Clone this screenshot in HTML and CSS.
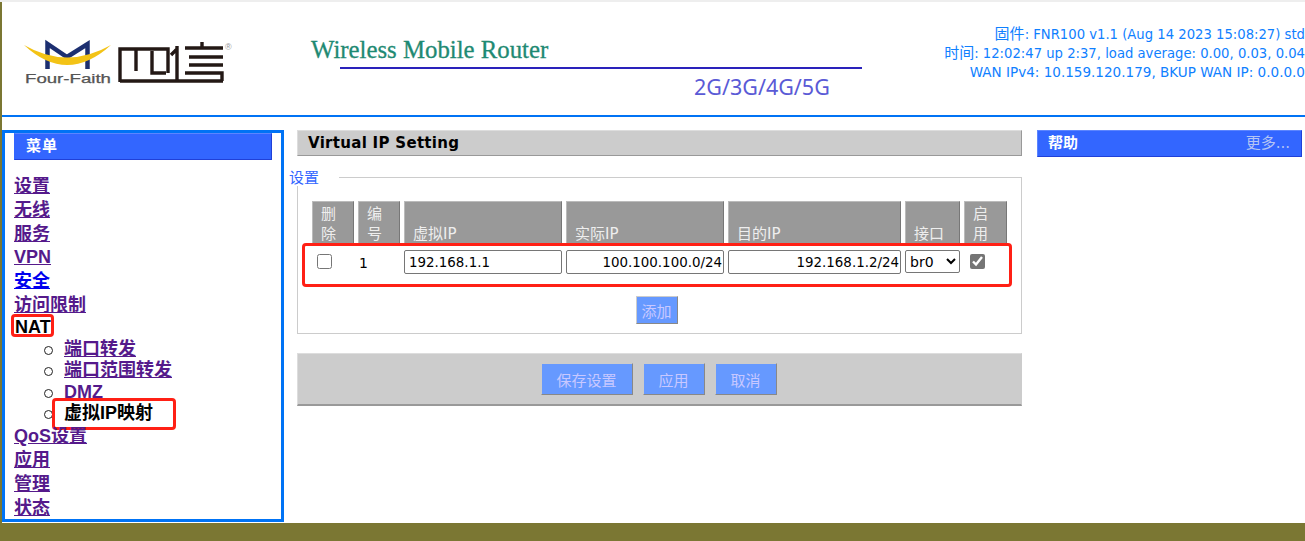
FILE: index.html
```html
<!DOCTYPE html>
<html lang="zh">
<head>
<meta charset="utf-8">
<title>Virtual IP Setting</title>
<link rel="stylesheet" href="styles.css">
</head>
<body>
<div class="page">
  <header class="header">
    <svg class="logo" width="215" height="50" viewBox="0 0 215 50" aria-label="Four-Faith">
      <path d="M22.5 29V4L42 17L62.5 4V29" fill="none" stroke="#1c2f70" stroke-width="4.5"/>
      <path d="M-1 5Q42 45 86 5Q42 30 -1 5Z" fill="#f3c316"/>
      <text class="logo-text" x="0" y="43" textLength="86" lengthAdjust="spacingAndGlyphs">Four-Faith</text>
      <g fill="none" stroke="#231815" stroke-width="3.4">
        <path d="M95 42V9H143V33M95 41H198"/>
        <path d="M111 9V31M127 11V33H141"/>
        <path d="M152 6V41M146 15L152 9"/>
        <path d="M160 8H198M177 2V8M164 17H198M164 25H198M160 33H197V41"/>
      </g>
      <text class="logo-reg" x="200" y="10">®</text>
    </svg>
    <div class="banner">
      <div class="banner-title">Wireless Mobile Router</div>
      <div class="banner-rule"></div>
      <div class="banner-bands">2G/3G/4G/5G</div>
    </div>
    <div class="info">
      <div class="info-line"><span class="cjk">固件</span>: FNR100 v1.1 (Aug 14 2023 15:08:27) std</div>
      <div class="info-line"><span class="cjk">时间</span>: 12:02:47 up 2:37, load average: 0.00, 0.03, 0.04</div>
      <div>WAN IPv4: 10.159.120.179, BKUP WAN IP: 0.0.0.0</div>
    </div>
  </header>

  <main class="main">
    <nav class="menu">
      <h2 class="menu-title">菜单</h2>
      <ul class="nav">
        <li><a class="visited" href="#">设置</a></li>
        <li><a class="visited" href="#">无线</a></li>
        <li><a class="visited" href="#">服务</a></li>
        <li><a class="visited" href="#">VPN</a></li>
        <li><a href="#">安全</a></li>
        <li><a class="visited" href="#">访问限制</a></li>
        <li class="current"><div class="nat">NAT</div><span class="mark mark-nat"></span>
          <ul class="subnav">
            <li><a class="visited" href="#">端口转发</a></li>
            <li><a class="visited" href="#">端口范围转发</a></li>
            <li><a class="visited" href="#">DMZ</a></li>
            <li class="current">虚拟IP映射<span class="mark mark-sub"></span></li>
          </ul>
        </li>
        <li><a class="visited" href="#">QoS设置</a></li>
        <li><a class="visited" href="#">应用</a></li>
        <li><a class="visited" href="#">管理</a></li>
        <li><a class="visited" href="#">状态</a></li>
      </ul>
    </nav>

    <section class="content">
      <h2 class="content-title">Virtual IP Setting</h2>
      <fieldset class="settings">
        <legend>设置</legend>
        <span class="mark mark-row"></span>
        <table class="grid">
          <thead>
            <tr>
              <th class="c-del">删除</th>
              <th class="c-num">编号</th>
              <th class="c-ip">虚拟IP</th>
              <th class="c-ip">实际IP</th>
              <th class="c-dst">目的IP</th>
              <th class="c-if">接口</th>
              <th class="c-on">启用</th>
            </tr>
          </thead>
          <tbody>
            <tr>
              <td><input class="check check-del" type="checkbox"></td>
              <td class="num">1</td>
              <td><input class="field" type="text" value="192.168.1.1"></td>
              <td><input class="field right" type="text" value="100.100.100.0/24"></td>
              <td><input class="field right" type="text" value="192.168.1.2/24"></td>
              <td><select class="pick"><option>br0</option></select></td>
              <td><input class="check check-on" type="checkbox" checked></td>
            </tr>
          </tbody>
        </table>
        <div class="add-row"><button class="btn btn-add" type="button">添加</button></div>
      </fieldset>
      <div class="actions">
        <button class="btn btn-save" type="button">保存设置</button>
        <button class="btn btn-act" type="button">应用</button>
        <button class="btn btn-act" type="button">取消</button>
      </div>
    </section>

    <aside class="help">
      <strong>帮助</strong>
      <span class="more">更多...</span>
    </aside>
  </main>
  <footer class="footer"></footer>
</div>
</body>
</html>
```
FILE: styles.css
```css
* { box-sizing: border-box; }
html, body { margin: 0; padding: 0; }
body {
  background: #fff;
  font-family: "DejaVu Sans", "Noto Sans CJK SC", sans-serif;
  font-size: 14px;
  color: #000;
  overflow: hidden;
}
.page {
  height: 541px;
  display: flex;
  flex-direction: column;
  border-top: 2px solid #eee;
  background: linear-gradient(#7b7733, #7b7733) left top / 2px 100% no-repeat;
}

/* header */
.header {
  height: 115px;
  margin-left: 2px;
  border-bottom: 2px solid #0073f5;
  display: flex;
  align-items: flex-start;
  flex-shrink: 0;
  background: #fff;
}
.logo { margin: 38px 0 0 23px; flex-shrink: 0; overflow: visible; }
.logo-text { font: 12px "Liberation Sans", sans-serif; fill: #555; stroke: #555; stroke-width: 0.25px; }
.logo-reg { font: 9px "Liberation Sans", sans-serif; fill: #999; }
.banner { width: 551px; margin: 34px 0 0 71px; flex-shrink: 0; }
.banner-title {
  font: 24.8px/28px "Liberation Serif", serif;
  color: #1f8a73;
  -webkit-text-stroke: 0.3px #1f8a73;
  white-space: nowrap;
}
.banner-rule { height: 2px; margin: 3px 0 0 29px; background: #2a22bb; }
.banner-bands { margin: 6px 0 0 383px; font: 21.5px/24px "Noto Sans", sans-serif; color: #5a5ad6; white-space: nowrap; }
.info {
  flex: 1;
  margin-top: 23px;
  text-align: right;
  color: #0f80ff;
  font-size: 13.55px;
  line-height: 19px;
  white-space: nowrap;
}
.info-line { font-size: 13.2px; }
.cjk { font-size: 15px; }

/* layout */
.main {
  flex: 1;
  margin-left: 2px;
  padding: 13px 3px 1px 0;
  display: flex;
  align-items: flex-start;
  background: #fff;
}
.footer { height: 18px; background: #7b7733; flex-shrink: 0; }

/* menu */
.menu {
  width: 282px;
  height: 392px;
  border: 3px solid #0073f5;
  flex-shrink: 0;
  padding: 0 9px;
}
.menu-title {
  margin: 0;
  height: 27px;
  width: 258px;
  background: #3366ff;
  border: 1px solid;
  border-color: #5c85ff #2040d8 #2040d8 #3366ff;
  color: #fff;
  font-size: 15px;
  letter-spacing: 1px;
  line-height: 25px;
  padding-left: 11px;
  font-weight: bold;
}
.nav, .subnav { list-style: none; margin: 0; padding: 0; }
.nav {
  margin-top: 15px;
  font-family: "Liberation Sans", "Noto Sans CJK SC", sans-serif;
  font-size: 18px;
  font-weight: bold;
  line-height: 23.8px;
}
.nav > li { position: relative; }
.nat { line-height: 18px; padding: 0 0 3px 1px; }
.nav a { color: #0000ee; }
.nav a.visited { color: #551a8b; }
.subnav { margin: 0 0 1px 50px; line-height: 21.4px; position: relative; }
.subnav > li { position: relative; }
.subnav > li::before {
  content: "";
  position: absolute;
  left: -20px;
  top: 7px;
  width: 7px;
  height: 7px;
  border: 1.5px solid #222;
  border-radius: 50%;
}
.current { color: #000; }

/* annotation frames */
.mark {
  position: absolute;
  border: 3px solid #ff2015;
  border-radius: 4px;
  pointer-events: none;
}
.mark-nat { left: -3px; top: -4px; width: 43px; height: 23px; }
.mark-sub { left: -12px; top: -5px; width: 124px; height: 32px; }
.mark-row { left: 4px; top: 57px; width: 710px; height: 44px; }

/* content */
.content { width: 725px; margin-left: 13px; flex-shrink: 0; }
.content-title {
  margin: 0;
  height: 26px;
  background: #ccc;
  border: 1px solid;
  border-color: #ddd #999 #999 #ddd;
  font-size: 15px;
  line-height: 25px;
  padding-left: 10px;
  font-weight: bold;
  letter-spacing: 0.3px;
}
.settings {
  position: relative;
  margin: 12px 0 0;
  padding: 0 0 9px 10px;
  height: 166px;
  border: 1px solid #ccc;
  min-width: 0;
}
.settings legend {
  margin-left: -19px;
  padding: 2px 0 0;
  width: 50px;
  color: #3366ff;
  font-size: 15px;
  line-height: 16px;
}
.grid { table-layout: fixed; border-collapse: separate; border-spacing: 4px 0; margin: 15px 0 0; width: 701px; }
.c-del, .c-num { width: 42px; }
.c-ip { width: 158px; }
.c-dst { width: 173px; }
.c-if { width: 55px; }
.c-on { width: 43px; }
.grid th {
  height: 43px;
  background: #999;
  border-style: solid;
  border-width: 1px 1px 0 1px;
  border-color: #bbb #777 #777 #bbb;
  color: #eee;
  font-weight: normal;
  font-size: 15px;
  line-height: 20px;
  vertical-align: bottom;
  text-align: left;
  padding: 0 7px 0 8px;
}
.grid th.c-on { padding: 0 8px; }
.grid td { padding: 6px 0 0; vertical-align: top; font-size: 14px; }
.num { line-height: 26px; }
.grid td.num { padding-left: 1px; }
.check { width: 15px; height: 15px; margin: 4px 0 0; accent-color: #757575; }
.check-del { margin-left: 5px; }
.check-on { margin-left: 6px; }
.field {
  width: 100%;
  height: 24px;
  border: 1px solid #767676;
  border-radius: 2px;
  padding: 0 4px;
  font: 13.4px "DejaVu Sans", sans-serif;
  color: #000;
  background: #fff;
}
.right { text-align: right; padding-right: 1px; }
.pick {
  width: 55px;
  height: 23px;
  font: 14px "DejaVu Sans", sans-serif;
  background: #fff;
  color: #000;
  border: 1px solid #767676;
  border-radius: 2px;
}
.add-row { text-align: center; margin-top: 20px; padding-right: 16px; }
.btn {
  background: #6699ff;
  border: 1px solid;
  border-color: #ccc #888 #888 #ccc;
  color: #c8c8ff;
  font: 15px "DejaVu Sans", "Noto Sans CJK SC", sans-serif;
  padding: 0;
}
.btn-add { width: 42px; height: 28px; }
.btn-save { width: 92px; height: 32px; }
.btn-act { width: 62px; height: 32px; margin-left: 10px; }
.actions {
  margin-top: 19px;
  height: 53px;
  background: #ccc;
  border-style: solid;
  border-width: 1px 1px 2px 1px;
  border-color: #ddd #ccc #999 #ddd;
  display: flex;
  justify-content: center;
  align-items: center;
  padding-right: 2px;
}

/* help */
.help {
  width: 265px;
  height: 27px;
  margin-left: 15px;
  background: #3366ff;
  border: 1px solid;
  border-color: #5c85ff #2040d8 #2040d8 #5c85ff;
  color: #fff;
  font-size: 15px;
  line-height: 25px;
  padding: 0 11px 0 10px;
  display: flex;
  justify-content: space-between;
  flex-shrink: 0;
}
.more { color: #b4c4f4; }
```
